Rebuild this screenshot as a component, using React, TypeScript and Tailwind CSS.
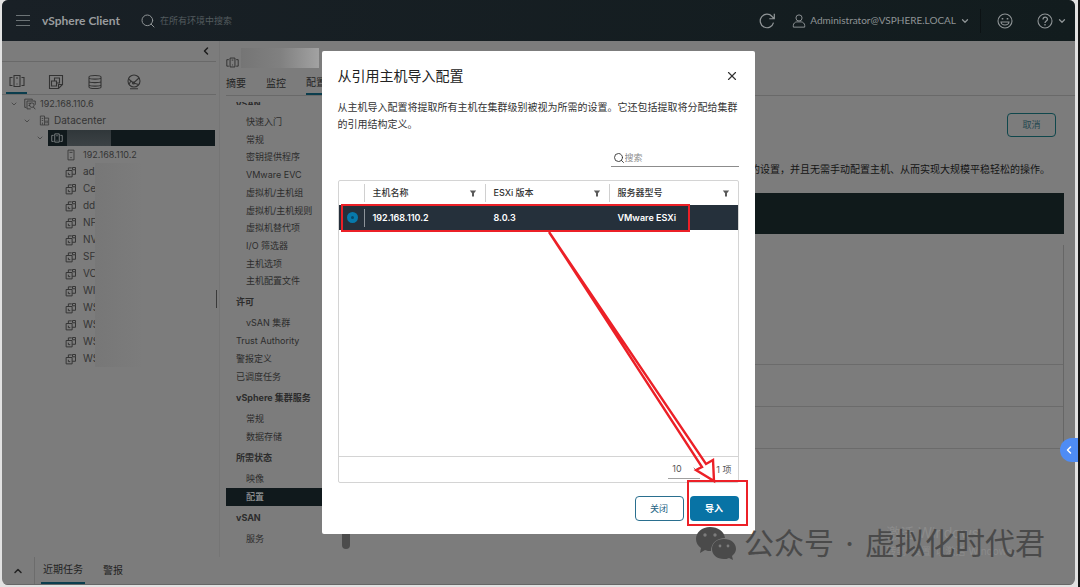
import type { ReactNode, SVGProps } from "react"
import { ChevronDown, ChevronLeft, ChevronUp, Search, X } from "lucide-react"

const vms = ["ad", "Ce", "dd", "NF", "NV", "SF", "VC", "WI", "WS", "WS", "WS", "WS"]

const generalItems = [
  "快速入门",
  "常规",
  "密钥提供程序",
  "VMware EVC",
  "虚拟机/主机组",
  "虚拟机/主机规则",
  "虚拟机替代项",
  "I/O 筛选器",
  "主机选项",
  "主机配置文件",
]

type Entry = { label: string; kind: "heading" | "item" | "flat"; active?: boolean }

const menu: Entry[] = [
  { label: "许可", kind: "heading" },
  { label: "vSAN 集群", kind: "item" },
  { label: "Trust Authority", kind: "flat" },
  { label: "警报定义", kind: "flat" },
  { label: "已调度任务", kind: "flat" },
  { label: "vSphere 集群服务", kind: "heading" },
  { label: "常规", kind: "item" },
  { label: "数据存储", kind: "item" },
  { label: "所需状态", kind: "heading" },
  { label: "映像", kind: "item" },
  { label: "配置", kind: "item", active: true },
  { label: "vSAN", kind: "heading" },
  { label: "服务", kind: "item" },
]

function Icon({ children, ...props }: SVGProps<SVGSVGElement>) {
  return (
    <svg viewBox="0 0 16 16" fill="none" stroke="currentColor" strokeWidth="1.1" aria-hidden="true" {...props}>
      {children}
    </svg>
  )
}

function ClusterIcon({ className }: { className: string }) {
  return (
    <Icon className={className}>
      <path d="M5 2.5h6v11H5zM3.5 4.5H1v8h2.5M12.5 4.5H15v8h-2.5M7 5h2M7.5 11h1" />
    </Icon>
  )
}

function VmGroupIcon({ className }: { className: string }) {
  return (
    <Icon className={className}>
      <path d="M1.5 1.5h13v9l-4 4h-9zM14.5 10.5h-4v4M3.500 7h5v5h-5zM6.500 7V4h5v5h-3" />
    </Icon>
  )
}

function StorageIcon({ className }: { className: string }) {
  return (
    <Icon className={className}>
      <path d="M2 3c0-2 12-2 12 0v10c0 2-12 2-12 0zM2 4c1 1.500 11 1.500 12 0M2 7.500c1 1.500 11 1.500 12 0M2 11c1 1.500 11 1.500 12 0" />
    </Icon>
  )
}

function NetworkIcon({ className }: { className: string }) {
  return (
    <Icon className={className}>
      <circle cx="8" cy="7" r="6" />
      <path d="M2.500 5l5 4 5.500-5M7.500 9l5 1.500M4 14.800h8M3 10l2-3" />
      <circle cx="7.500" cy="9" r="1" />
    </Icon>
  )
}

function VcenterIcon({ className }: { className: string }) {
  return (
    <Icon className={className}>
      <path d="M3 12.500H1v-11h10V3M4 4h11v5M4 4v10.500h5M6 7h3M6 10h2" />
      <circle cx="10.500" cy="9.500" r="3" />
      <path d="M12.500 12l2.500 3" />
    </Icon>
  )
}

function DatacenterIcon({ className }: { className: string }) {
  return (
    <Icon className={className}>
      <path d="M2 14.500v-13h6v13M8 4.500h6v10H2M4 5h2M4 8h2M10 8v4M12 8v4M5 14v-3" />
    </Icon>
  )
}

function HostIcon({ className }: { className: string }) {
  return (
    <Icon className={className}>
      <path d="M4 1.500h8v13H4zM6 4.500h4M7 11.500h2" />
    </Icon>
  )
}

function VmIcon({ className }: { className: string }) {
  return (
    <Icon className={className} strokeWidth="1.300">
      <path d="M1.500 6h8v8.500h-8zM4.500 6V2.500H9M9.500 11H14V5M4.500 9v2.500H7M10 2h4v3h-4z" />
    </Icon>
  )
}

function FilterIcon() {
  return (
    <svg viewBox="0 0 8 8" className="size-2 shrink-0" fill="#5a5a5a" aria-hidden="true">
      <path d="M.8 1.500h6.400L5 4.300V7.500H3V4.300z" />
    </svg>
  )
}

function TopBar() {
  return (
    <header className="flex h-[41px] shrink-0 items-center bg-linear-to-r from-[#192026] to-[#121c1e] text-[#8f9496]">
      <button aria-label="菜单" className="ml-3.5 flex w-4 flex-col gap-1">
        <span className="h-px w-[14px] bg-[#6c7376]" />
        <span className="h-px w-[14px] bg-[#6c7376]" />
        <span className="h-px w-[14px] bg-[#6c7376]" />
      </button>
      <h1 className="ml-2.5 font-['Lato'] text-[12px] font-bold text-[#999c9e]">vSphere Client</h1>
      <label className="ml-5 flex items-center gap-1">
        <Search className="size-4" strokeWidth={1.5} />
        <input
          aria-label="搜索"
          placeholder="在所有环境中搜索"
          className="w-40 bg-transparent text-[9px] outline-none placeholder:text-[#535b5e]"
        />
      </label>
      <button aria-label="刷新" className="ml-auto">
        <Icon className="size-[18px]">
          <path d="M13.800 9.500A6 6 0 1 1 12.500 4l1.500 1.500M14.500 1.500V6H10" />
        </Icon>
      </button>
      <button className="ml-4 flex items-center gap-1 text-[10px]">
        <Icon className="size-[14px]">
          <circle cx="8" cy="4.500" r="3.500" />
          <path d="M1.500 15v-2c0-2 2-4 4-4h5c2 0 4 2 4 4v2z" />
        </Icon>
        <span className="font-['Lato']">Administrator@VSPHERE.LOCAL</span>
        <ChevronDown className="size-[10px]" strokeWidth={3} />
      </button>
      <span className="ml-2.5 h-6 w-px bg-[#0c1214]" />
      <button aria-label="反馈" className="ml-4">
        <Icon className="size-4">
          <circle cx="8" cy="8" r="7" />
          <path d="M4 9h8c-.5 4-7.500 4-8 0z" />
          <path d="M5.500 5v1.500M10.500 5v1.500" strokeWidth="1.600" />
        </Icon>
      </button>
      <button aria-label="帮助" className="mr-2 ml-6 flex items-center gap-1">
        <Icon className="size-4">
          <circle cx="8" cy="8" r="7" />
          <path d="M6 6.500c0-3 4.500-3 4.500-.300C10.500 8 8 8 8 10M8 11v1.500" strokeWidth="1.300" />
        </Icon>
        <ChevronDown className="size-[10px]" strokeWidth={3} />
      </button>
    </header>
  )
}

function TreeRow({ indent, children }: { indent: string; children: ReactNode }) {
  return <li className={`flex h-[17px] items-center gap-1 ${indent}`}>{children}</li>
}

function Sidebar() {
  return (
    <nav className="relative w-[214px] shrink-0">
      <div className="flex h-[21px] items-center justify-end border-b border-[#696969] pr-1">
        <button aria-label="折叠">
          <ChevronLeft className="size-3 text-[#1c1c1c]" strokeWidth={3} />
        </button>
      </div>
      <div className="flex h-[33px] items-end border-b border-[#696969] pl-1 text-[#333]">
        <button
          aria-label="主机和集群"
          className="flex h-6 w-[21px] items-center justify-center border-b-2 border-[#0b3d4d]"
        >
          <ClusterIcon className="size-4" />
        </button>
        <button aria-label="虚拟机" className="ml-[18px] flex h-6 w-[21px] items-center justify-center">
          <VmGroupIcon className="size-4" />
        </button>
        <button aria-label="存储" className="ml-[18px] flex h-6 w-[21px] items-center justify-center">
          <StorageIcon className="size-4" />
        </button>
        <button aria-label="网络" className="ml-[18px] flex h-6 w-[21px] items-center justify-center">
          <NetworkIcon className="size-4" />
        </button>
      </div>
      <ul className="text-[10px] text-[#343434]">
        <TreeRow indent="pl-2">
          <ChevronDown className="size-2" />
          <VcenterIcon className="ml-0.5 size-3" />
          <span className="text-[9px]">192.168.110.6</span>
        </TreeRow>
        <TreeRow indent="pl-[21px]">
          <ChevronDown className="size-2" />
          <DatacenterIcon className="ml-1 size-[11px]" />
          Datacenter
        </TreeRow>
        <TreeRow indent="pl-[34px]">
          <ChevronDown className="size-2" />
          <span className="mr-px flex h-4 flex-1 items-center bg-[#10191c] pl-[3px] text-[#8a8f91]">
            <ClusterIcon className="size-3" />
            <span className="ml-1 h-full w-11 bg-linear-to-b from-[#30373a] to-[#3c4245]" />
          </span>
        </TreeRow>
        <TreeRow indent="pl-[63px]">
          <HostIcon className="size-3" />
          <span className="ml-0.5 text-[9px]">192.168.110.2</span>
        </TreeRow>
        {vms.map((vm, index) => (
          <TreeRow key={index} indent="pl-[63px]">
            <VmIcon className="size-3" />
            <span className="ml-0.5 w-3">{vm}</span>
            <span className="-ml-1 h-full w-12 bg-linear-to-r from-[#777777] to-[#7c7c7c]" />
          </TreeRow>
        ))}
      </ul>
      <span className="absolute top-[249px] -right-px h-[18px] w-px bg-[#3a3a3a]" />
    </nav>
  )
}

function ConfigMenu() {
  return (
    <ul className="w-[126px] shrink-0 text-[9px] text-[#2c2c2c]">
      <li className="mt-1.5 mb-2 ml-[10px] flex h-[3px] items-center overflow-hidden font-bold">vSAN</li>
      <li>
        <ul className="grid h-[177px] auto-rows-fr">
          {generalItems.map((item) => (
            <li key={item} className="flex items-center pl-5">
              <a href="#">{item}</a>
            </li>
          ))}
        </ul>
      </li>
      {menu.map((entry, index) => (
        <li
          key={index}
          className={
            entry.kind === "heading"
              ? "flex h-6 items-center pl-[10px] font-bold"
              : entry.kind === "flat"
                ? "flex h-[18px] items-center pl-[10px]"
                : entry.active
                  ? "flex h-[18px] items-center bg-[#10191c] pl-5 text-[#a5a8a9]"
                  : "flex h-[18px] items-center pl-5"
          }
        >
          {entry.kind === "heading" ? entry.label : <a href="#">{entry.label}</a>}
        </li>
      ))}
    </ul>
  )
}

function Content() {
  return (
    <main className="ml-[3px] flex min-w-0 flex-1 flex-col border-l border-[#757575]">
      <div className="flex h-[30px] items-center pt-1 pl-1.5">
        <ClusterIcon className="mt-2 size-[13px] text-[#2c2c2c]" />
        <span className="ml-0.5 h-5 w-[78px] bg-linear-to-r from-[#757575] via-[#808080] to-[#a2a2a2]" />
      </div>
      <div className="ml-1.5 flex h-[25px] items-end gap-5 border-b border-[#696969] text-[10px] text-[#242424]">
        <button className="h-5 pb-1">摘要</button>
        <button className="h-5 pb-1">监控</button>
        <button className="h-5 border-b-2 border-[#0b3d4d] pb-1">配置</button>
      </div>
      <div className="flex min-h-0 flex-1 pl-1.5">
        <ConfigMenu />
        <section className="flex min-w-0 flex-1 flex-col pr-[11px]">
          <button className="mt-[17px] mr-2 h-6 w-[49px] self-end rounded-sm border border-[#0f474c] text-[9px] text-[#24474f]">
            取消
          </button>
          <p className="mt-6 mr-3.5 text-right text-[10px] leading-4 whitespace-nowrap text-[#141414]">
            使用配置后，集群中的所有主机将具有相同的设置，并且无需手动配置主机、从而实现大规模平稳轻松的操作。
          </p>
          <div className="mt-4 h-[41px] bg-[#101a1b]" />
          <div className="mt-[11px] border-r border-[#666]">
            <div className="h-[120px] border-b border-[#6b6b6b]" />
            <div className="h-[42px] border-b border-[#6b6b6b]" />
            <div className="h-[42px] border-b border-[#6b6b6b]" />
          </div>
        </section>
      </div>
    </main>
  )
}

function Annotations() {
  return (
    <svg
      viewBox="0 0 433 483"
      className="pointer-events-none absolute inset-0 size-full"
      fill="none"
      stroke="#ec2027"
      strokeWidth="2"
      aria-hidden="true"
    >
      <path d="M20 154h347v26H20zM366 430h59v44h-59z" />
      <path d="M227 181L384 413L391 409L392 430L374 419L380 416z" strokeWidth="2.400" />
    </svg>
  )
}

function ImportDialog() {
  return (
    <div className="absolute inset-0 flex items-center justify-center pr-1 pb-0.5">
      <div
        role="dialog"
        aria-labelledby="dialog-title"
        className="relative flex h-[483px] w-[433px] flex-col rounded-xs bg-white px-4 text-[#333]"
      >
        <div className="mt-[15px] flex h-5 items-center justify-between">
          <h2 id="dialog-title" className="text-[14px] leading-5 text-[#222]">
            从引用主机导入配置
          </h2>
          <button aria-label="关闭对话框">
            <X className="size-3.5" strokeWidth={2} />
          </button>
        </div>
        <p className="mt-[13px] text-[10px] leading-[17px]">
          从主机导入配置将提取所有主机在集群级别被视为所需的设置。它还包括提取将分配给集群的引用结构定义。
        </p>
        <label className="mt-4 flex h-[18px] w-32 items-center self-end border-b border-[#8c8c8c] pl-0.5">
          <Search className="size-3" strokeWidth={1.8} />
          <input
            aria-label="搜索主机"
            placeholder="搜索"
            className="min-w-0 flex-1 text-[9px] outline-none placeholder:text-[#8c8c8c]"
          />
        </label>
        <div className="mt-[13px] flex min-h-0 flex-1 flex-col rounded-xs border border-[#d4d4d4]">
          <table className="w-full table-fixed text-left text-[9px]">
            <colgroup>
              <col className="w-[25px]" />
              <col className="w-[121px]" />
              <col className="w-[124px]" />
              <col />
            </colgroup>
            <thead>
              <tr className="h-6 align-top">
                <th aria-label="选择" />
                {["主机名称", "ESXi 版本", "服务器型号"].map((title) => (
                  <th key={title} className="p-0 pt-[3px] font-medium">
                    <div className="flex h-[18px] items-center justify-between border-l border-[#d0d0d0] pr-2 pl-2">
                      {title}
                      <FilterIcon />
                    </div>
                  </th>
                ))}
              </tr>
            </thead>
            <tbody>
              <tr className="h-[25px] bg-[#25303b] font-semibold text-white">
                <td className="p-0">
                  <input
                    type="radio"
                    name="host"
                    aria-label="192.168.110.2"
                    defaultChecked
                    className="ml-2 block size-[11px] appearance-none rounded-full border-4 border-[#0779ab] bg-[#064a6c]"
                  />
                </td>
                <td className="p-0">
                  <div className="flex h-[18px] items-center border-l border-[#8d949b] pl-2">192.168.110.2</div>
                </td>
                <td className="p-0 pl-[9px]">8.0.3</td>
                <td className="p-0 pl-[9px]">VMware ESXi</td>
              </tr>
            </tbody>
          </table>
          <div className="mt-auto flex h-[26px] items-center justify-end gap-4 border-t border-[#d4d4d4] pr-1.5 text-[9px] text-[#555]">
            <label className="flex w-8 items-center justify-between border-b border-[#a0a0a0] pl-1">
              <select aria-label="每页项数" className="h-[18px] w-4 appearance-none">
                <option>10</option>
              </select>
              <ChevronDown className="size-2" />
            </label>
            <span>1 项</span>
          </div>
        </div>
        <div className="mt-[13px] mb-[13px] flex h-[25px] shrink-0 justify-end gap-1.5 text-[9px]">
          <button className="w-[49px] rounded-sm border border-[#2a6f8f] text-[#1a6283]">关闭</button>
          <button className="w-[49px] rounded-sm bg-[#0873a5] font-semibold text-white">导入</button>
        </div>
        <Annotations />
      </div>
    </div>
  )
}

function Watermark() {
  return (
    <div className="pointer-events-none absolute right-[35px] bottom-[26px] flex items-center gap-2 text-[#4a4a4a]">
      <svg viewBox="0 0 40 33" className="h-[33px] w-10" fill="currentColor" aria-hidden="true">
        <path d="M14 0C6 0 0 5 0 12c0 4 2 7 5 9l-1 5 5-3c2 1 4 1 6 1 0-8 6-13 14-13C28 4 22 0 14 0z" />
        <path d="M28 12c-7 0-12 4-12 10s5 10 12 10c2 0 3 0 5-1l4 2-1-4c2-2 4-4 4-7 0-6-5-10-12-10z" />
        <g fill="#7c7c7c">
          <circle cx="9" cy="8" r="1.700" />
          <circle cx="19" cy="8" r="1.700" />
          <circle cx="24" cy="19" r="1.400" />
          <circle cx="32" cy="19" r="1.400" />
        </g>
      </svg>
      <p className="flex text-[30px] leading-9">
        <span>公众号</span>
        <span className="w-[31px] text-center">·</span>
        <span>虚拟化时代君</span>
      </p>
    </div>
  )
}

export default function App() {
  return (
    <div className="h-screen border-r-2 border-[#161616] bg-[#e2e2e2] pr-[3px] pb-0.5 pl-0.5 font-['Inter','Noto_Sans_CJK_SC',sans-serif]">
      <div className="flex h-full flex-col overflow-hidden rounded-md bg-[#7c7c7c]">
        <TopBar />
        <div className="flex min-h-0 flex-1 overflow-hidden">
          <Sidebar />
          <Content />
        </div>
        <footer className="flex h-7 shrink-0 items-center border-b border-[#666] text-[10px] text-[#222]">
          <button aria-label="展开" className="flex w-8 justify-center">
            <ChevronUp className="size-3" strokeWidth={3} />
          </button>
          <span className="h-full w-px bg-[#6c6c6c]" />
          <button className="ml-1.5 h-full border-b-2 border-[#0b3d4d] px-0.5">近期任务</button>
          <button className="ml-[18px] h-full">警报</button>
        </footer>
      </div>
      <div className="pointer-events-none absolute right-[58px] bottom-7 text-[#8b8b8b]">
        <p className="text-[14px] leading-5 whitespace-nowrap">激活 Windows</p>
        <p className="text-[10px] leading-4 whitespace-nowrap">转到"设置"以激活 Windows。</p>
      </div>
      <ImportDialog />
      <Watermark />
      <span className="absolute top-[534px] left-[342px] h-[15px] w-2 rounded-b-sm bg-[#4c4c4c]" />
      <button
        aria-label="展开侧栏"
        className="absolute top-[438px] right-0.5 flex h-6 w-[18px] items-center justify-center rounded-l-full bg-[#4e8cf5] text-white"
      >
        <ChevronLeft className="size-3" strokeWidth={3} />
      </button>
    </div>
  )
}
